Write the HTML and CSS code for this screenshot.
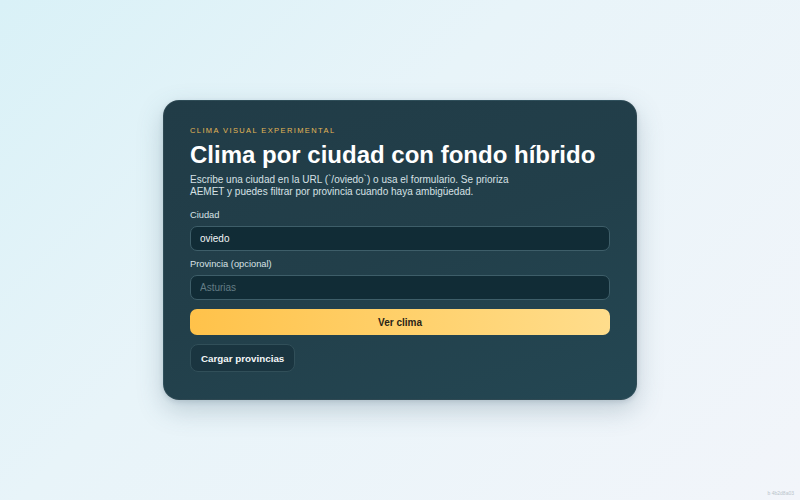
FILE: index.html
```html
<!DOCTYPE html>
<html lang="es">
<head>
<meta charset="utf-8">
<title>Clima por ciudad</title>
<link rel="stylesheet" href="styles.css">
</head>
<body>
<main class="page">
  <section class="card">
    <p class="eyebrow">CLIMA VISUAL EXPERIMENTAL</p>
    <h1 class="title">Clima por ciudad con fondo híbrido</h1>
    <p class="intro">Escribe una ciudad en la URL (`/oviedo`) o usa el formulario. Se prioriza AEMET y puedes filtrar por provincia cuando haya ambigüedad.</p>
    <form class="form">
      <label class="label" for="city">Ciudad</label>
      <input class="field" id="city" type="text" value="oviedo">
      <label class="label label-next" for="prov">Provincia (opcional)</label>
      <input class="field" id="prov" type="text" placeholder="Asturias">
      <button class="primary" type="button">Ver clima</button>
      <div class="row">
        <button class="secondary" type="button">Cargar provincias</button>
      </div>
    </form>
  </section>
  <span class="build">b 4b2d8a03</span>
</main>
</body>
</html>
```
FILE: styles.css
```css
* { box-sizing: border-box; }
html, body { margin: 0; height: 100%; }
body {
  font-family: "Liberation Sans", Arial, sans-serif;
  background: linear-gradient(135deg, #d9f1f7 0%, #e8f4f9 40%, #f2f5fa 100%);
}
.page {
  height: 500px;
  display: flex;
  align-items: center;
  justify-content: center;
  position: relative;
}
.card {
  width: 474px;
  background: linear-gradient(160deg, #213c47 0%, #223f4a 50%, #244753 100%);
  border: 1px solid rgba(255, 255, 255, 0.06);
  border-radius: 16px;
  padding: 25px 26px 27px;
  box-shadow: 0 10px 26px rgba(60, 95, 115, 0.26), 0 2px 5px rgba(40, 70, 90, 0.15);
  color: #f4f7f8;
}
.eyebrow {
  margin: 0;
  font-size: 7.5px;
  letter-spacing: 1.4px;
  color: #e3b656;
  line-height: 10px;
}
.title {
  margin: 5px 0 0;
  font-size: 24px;
  line-height: 28px;
  font-weight: 700;
  color: #ffffff;
}
.intro {
  margin: 5px 0 0;
  font-size: 10px;
  line-height: 12px;
  color: #d6e1e5;
  max-width: 335px;
}
.form {
  margin-top: 11px;
  display: flex;
  flex-direction: column;
}
.label {
  font-size: 9.3px;
  line-height: 12px;
  color: #d8e2e6;
  margin-bottom: 5px;
}
.label-next { margin-top: 7px; }
.field {
  height: 25px;
  width: 100%;
  border-radius: 7px;
  border: 1px solid #3e5e69;
  background: #112c36;
  color: #f2f6f7;
  font-family: inherit;
  font-size: 10px;
  padding: 0 9px;
  margin: 0;
  outline: none;
}
.field::placeholder { color: #637c85; }
.primary {
  margin-top: 9px;
  height: 26px;
  width: 100%;
  border: none;
  border-radius: 7px;
  background: linear-gradient(90deg, #ffc24a 0%, #ffd06a 50%, #ffdd8c 100%);
  color: #2a2417;
  font-family: inherit;
  font-weight: 700;
  font-size: 10px;
}
.row {
  margin-top: 9px;
  display: flex;
}
.secondary {
  height: 28px;
  padding: 0 10px;
  border-radius: 8px;
  border: 1px solid #314f59;
  background: #1a3540;
  color: #f4f7f8;
  font-family: inherit;
  font-weight: 700;
  font-size: 9.8px;
}
.build {
  position: absolute;
  right: 6px;
  bottom: 4px;
  font-size: 5px;
  color: #b9c4ca;
}
```
